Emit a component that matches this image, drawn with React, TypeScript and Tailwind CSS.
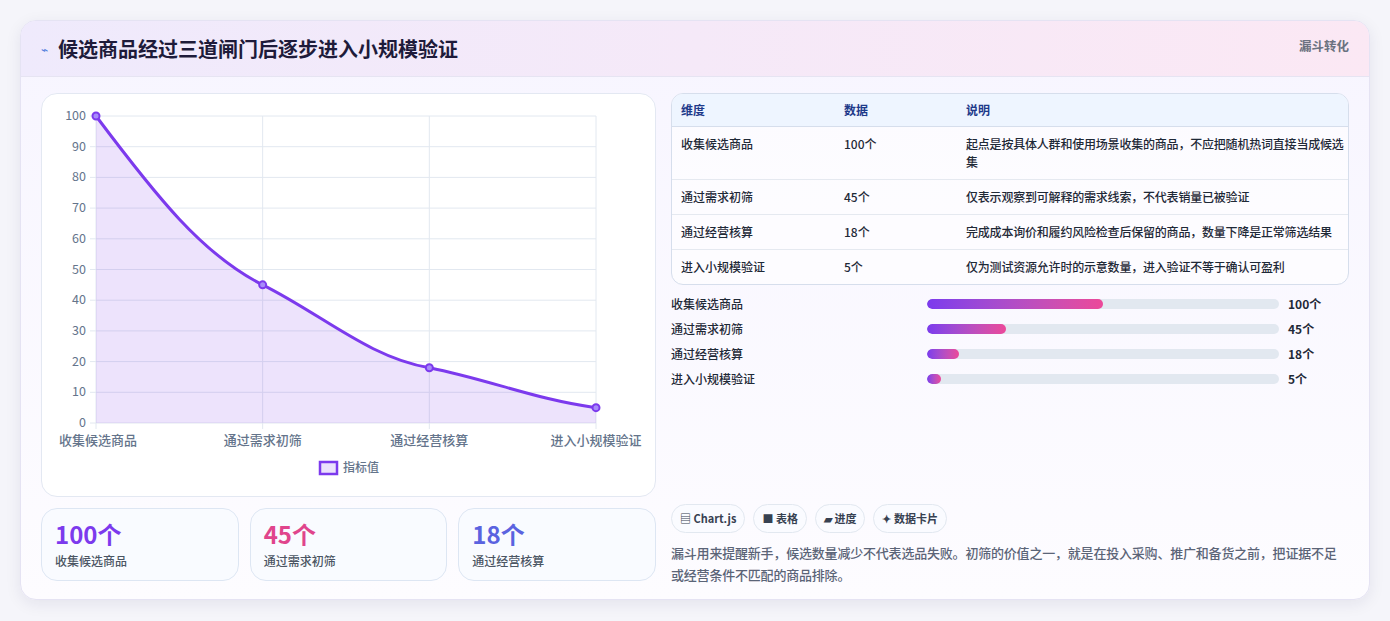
import React from 'react';

const rows = [
  { name: '收集候选商品', value: 100, note: '起点是按具体人群和使用场景收集的商品，不应把随机热词直接当成候选集' },
  { name: '通过需求初筛', value: 45, note: '仅表示观察到可解释的需求线索，不代表销量已被验证' },
  { name: '通过经营核算', value: 18, note: '完成成本询价和履约风险检查后保留的商品，数量下降是正常筛选结果' },
  { name: '进入小规模验证', value: 5, note: '仅为测试资源允许时的示意数量，进入验证不等于确认可盈利' },
];

const font = { fontFamily: '"Noto Sans CJK SC", "Noto Sans", sans-serif' };

function Chart() {
  // plot area in svg coords
  const x0 = 54, x1 = 554, y0 = 22, y1 = 329;
  const px = (i: number) => x0 + ((x1 - x0) / 3) * i;
  const py = (v: number) => y1 - ((y1 - y0) * v) / 100;
  const pts = rows.map((r, i) => [px(i), py(r.value)]);
  const line = `M${pts[0][0]},${pts[0][1]} C${pts[0][0] + 60},${pts[0][1] + 80} ${pts[1][0] - 60},${pts[1][1] - 30} ${pts[1][0]},${pts[1][1]} C${pts[1][0] + 60},${pts[1][1] + 30} ${pts[2][0] - 60},${pts[2][1] - 10} ${pts[2][0]},${pts[2][1]} C${pts[2][0] + 60},${pts[2][1] + 12} ${pts[3][0] - 60},${pts[3][1] - 8} ${pts[3][0]},${pts[3][1]}`;
  const area = `${line} L${x1},${y1} L${x0},${y1} Z`;
  return (
    <svg width="615" height="401" viewBox="0 0 615 401" style={font}>
      {[0, 10, 20, 30, 40, 50, 60, 70, 80, 90, 100].map((v) => (
        <g key={v}>
          <line x1={x0 - 6} x2={x1} y1={py(v)} y2={py(v)} stroke="#e2e8f0" strokeWidth="1" />
          <text x={x0 - 10} y={py(v) + 4} fontSize="12.5" fill="#64748b" textAnchor="end">{v}</text>
        </g>
      ))}
      {[0, 1, 2, 3].map((i) => (
        <line key={i} x1={px(i)} x2={px(i)} y1={y0} y2={y1 + 6} stroke="#e2e8f0" strokeWidth="1" />
      ))}
      <path d={area} fill="rgba(124,58,237,0.14)" />
      <path d={line} fill="none" stroke="#7c3aed" strokeWidth="3" />
      {pts.map(([x, y], i) => (
        <circle key={i} cx={x} cy={y} r="3.5" fill="#a78bfa" stroke="#7c3aed" strokeWidth="2" />
      ))}
      {rows.map((r, i) => (
        <text key={r.name} x={Math.min(Math.max(px(i), 56), 558)} y={351} fontSize="13" fontWeight="500" fill="#64748b" textAnchor="middle">{r.name}</text>
      ))}
      <rect x="278" y="368" width="17" height="12" fill="rgba(124,58,237,0.15)" stroke="#7c3aed" strokeWidth="2.5" />
      <text x="301" y="378" fontSize="12" fontWeight="500" fill="#64748b">指标值</text>
    </svg>
  );
}

export default function App() {
  return (
    <div className="min-h-screen bg-[#f5f5fa] px-5 pt-5" style={font}>
      <div className="w-[1350px] h-[580px] rounded-2xl bg-gradient-to-b from-[#f7f5ff] to-[#fdfcff] border border-[#e5e3f3] shadow-[0_4px_16px_rgba(30,30,80,0.08)] overflow-hidden flex flex-col">
        <div className="h-[56px] shrink-0 flex items-start justify-between bg-gradient-to-r from-[#efeafc] to-[#fbe8f4] border-b border-[#e6e4f2] px-5">
          <div className="flex items-center gap-[10px] h-full">
            <span className="text-[#4f7ddd] text-xs">⌁</span>
            <h1 className="text-[20px] font-bold text-[#1e1b3a]">候选商品经过三道闸门后逐步进入小规模验证</h1>
          </div>
          <span className="mt-[16px] text-[12.5px] font-bold text-[#6b7280]">漏斗转化</span>
        </div>
        <div className="flex gap-[15px] px-5 pt-[16px]">
          <div className="w-[615px] flex flex-col gap-[11px]">
            <div className="h-[404px] rounded-2xl bg-white border border-[#e3e8f2]">
              <Chart />
            </div>
            <div className="grid grid-cols-3 gap-[11px]">
              {[
                { v: '100个', c: 'text-[#7c3aed]', l: '收集候选商品' },
                { v: '45个', c: 'text-[#e0458c]', l: '通过需求初筛' },
                { v: '18个', c: 'text-[#5b63e0]', l: '通过经营核算' },
              ].map((s) => (
                <div key={s.l} className="h-[73px] rounded-2xl border border-[#dde6f3] bg-[#f9fbff] px-[13px] pt-[10px]">
                  <div className={`text-[24px] font-bold leading-[30px] ${s.c}`}>{s.v}</div>
                  <div className="text-[12px] font-medium text-[#4b5563] mt-[3px]">{s.l}</div>
                </div>
              ))}
            </div>
          </div>
          <div className="flex-1 flex flex-col">
            <div className="rounded-xl border border-[#d6deec] overflow-hidden bg-white/60 text-[12px] text-[#1f2937] font-medium">
              <div className="flex h-[33px] items-center bg-[#eef5ff] text-[#1e3a8a] font-semibold border-b border-[#d6deec] pl-[9px]">
                <div className="w-[163px]">维度</div>
                <div className="w-[122px]">数据</div>
                <div className="flex-1">说明</div>
              </div>
              {rows.map((r, i) => (
                <div key={r.name} className={`flex pl-[9px] pr-[4px] py-[8px] ${i < 3 ? 'border-b border-[#e5e9f0]' : ''} leading-[18px]`}>
                  <div className="w-[163px]">{r.name}</div>
                  <div className="w-[122px]">{r.value}个</div>
                  <div className="flex-1 tracking-[-0.2px]">{r.note}</div>
                </div>
              ))}
            </div>
            <div className="flex flex-col gap-[7px] mt-[10px]">
              {rows.map((r) => (
                <div key={r.name} className="flex items-center h-[18px] text-[12px] font-medium text-[#1f2937]">
                  <div className="w-[256px]">{r.name}</div>
                  <div className="w-[352px] h-[10px] rounded-full bg-[#e2e8f0] overflow-hidden">
                    <div className="h-full rounded-full bg-gradient-to-r from-[#7c3aed] to-[#ec4899]" style={{ width: `${Math.max(r.value / 2, 4)}%` }} />
                  </div>
                  <div className="ml-[9px] font-bold">{r.value}个</div>
                </div>
              ))}
            </div>
            <div className="flex gap-[8px] mt-[116px] text-[11px] font-semibold text-[#374151]">
              {['▤ Chart.js', '■ 表格', '▰ 进度', '✦ 数据卡片'].map((t) => (
                <span key={t} className="h-[29px] flex items-center px-[8px] rounded-full border border-[#e2e8f0] bg-[#fafbff]">{t}</span>
              ))}
            </div>
            <p className="mt-[9px] text-[13px] leading-[22px] text-[#5b6477] font-medium tracking-[-0.2px]">
              漏斗用来提醒新手，候选数量减少不代表选品失败。初筛的价值之一，就是在投入采购、推广和备货之前，把证据不足或经营条件不匹配的商品排除。
            </p>
          </div>
        </div>
      </div>
    </div>
  );
}
